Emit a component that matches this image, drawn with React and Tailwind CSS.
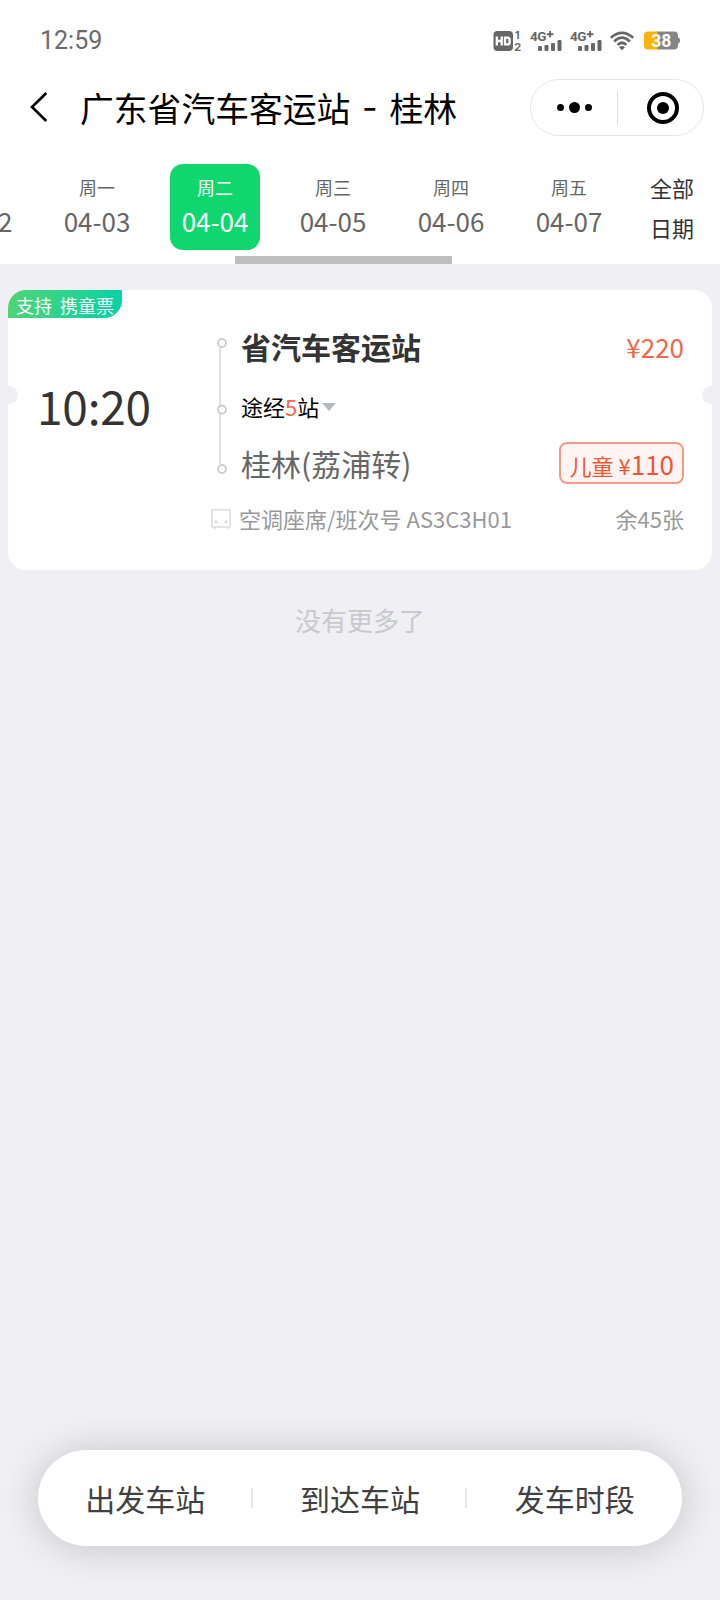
const days = [
  { week: '周日', date: '04-02' },
  { week: '周一', date: '04-03' },
  { week: '周二', date: '04-04' },
  { week: '周三', date: '04-05' },
  { week: '周四', date: '04-06' },
  { week: '周五', date: '04-07' },
];

const filters = ['出发车站', '到达车站', '发车时段'];

function HdIcon() {
  return (
    <svg width="30" height="22" viewBox="0 0 30 22" className="shrink-0 overflow-visible">
      <rect x="0.5" y="1" width="19.5" height="20" rx="4" fill="#666" />
      <path d="M3.8 6.5V15.5M8.7 6.5V15.5M3.8 11H8.7M12 7.6H14.5Q16.6 7.6 16.6 9.6V12.4Q16.6 14.4 14.5 14.4H12Z" fill="none" stroke="#fff" strokeWidth="2.3" />
      <text x="22" y="8.8" fontSize="10.5" fontWeight="700" fill="#666" className="font-[Inter,sans-serif]">1</text>
      <text x="21.2" y="20.8" fontSize="11" fontWeight="700" fill="#666" className="font-[Inter,sans-serif]">2</text>
    </svg>
  );
}

function SignalIcon() {
  return (
    <svg width="33" height="22" viewBox="0 0 33 22" className="shrink-0 overflow-visible">
      <text x="0" y="11" fontSize="13.5" fontWeight="700" letterSpacing="-0.6" fill="#666" className="font-[Roboto,sans-serif]">4G</text>
      <path d="M16.8 4.2H23.4M20.1 1V7.4" stroke="#666" strokeWidth="1.9" />
      <rect x="8" y="16" width="4" height="5" rx="1.2" fill="#666" />
      <rect x="14.5" y="15" width="4" height="6" rx="1.2" fill="#666" />
      <rect x="21" y="13" width="4" height="8" rx="1.2" fill="#666" />
      <rect x="27.5" y="10" width="4" height="11" rx="1.2" fill="#666" />
    </svg>
  );
}

function WifiIcon() {
  return (
    <svg width="24" height="20" viewBox="0 0 24 20" className="shrink-0">
      <g fill="none" stroke="#666" strokeWidth="2.7">
        <path d="M0.8 6.8Q12 -3.2 23.2 6.8" />
        <path d="M4.2 10.4Q12 3 19.8 10.4" />
        <path d="M7.6 13.9Q12 9.6 16.4 13.9" />
      </g>
      <path d="M9 16.2Q12 14 15 16.2L12 19.2Z" fill="#666" />
    </svg>
  );
}

function BatteryIcon() {
  return (
    <svg width="36" height="19" viewBox="0 0 36 19" className="shrink-0">
      <path d="M13 0.5H30Q34 0.5 34 4.5V6.5Q36 6.5 36 9.5Q36 12.5 34 12.5V14.5Q34 18.5 30 18.5H13Z" fill="#858585" />
      <path d="M4 0.5H13.5V18.5H4Q0 18.5 0 14.5V4.5Q0 0.5 4 0.5Z" fill="#fbb30b" />
      <text x="17.2" y="15.7" textAnchor="middle" fontSize="17.5" fontWeight="700" fill="#fff" className="font-[Roboto,sans-serif]">38</text>
    </svg>
  );
}

function StatusBar() {
  return (
    <div className="flex h-[79px] items-center pl-[40px] pr-[40px]">
      <span className="pt-0.5 font-[Roboto,sans-serif] text-[25px] leading-none text-[#6b6b6b]">12:59</span>
      <div className="ml-auto flex items-center pt-0.5">
        <HdIcon />
        <div className="ml-[7px] flex gap-[7px]">
          <SignalIcon />
          <SignalIcon />
        </div>
        <div className="ml-[7px] flex items-center gap-[10px]">
          <WifiIcon />
          <BatteryIcon />
        </div>
      </div>
    </div>
  );
}

function NavBar() {
  return (
    <div className="flex h-[57px] items-center pl-[30px] pr-4">
      <svg width="18" height="30" viewBox="0 0 18 30" fill="none" stroke="#000" strokeWidth="2.6" className="-mt-0.5">
        <path d="M16.3 1L2 15L16.3 29" />
      </svg>
      <h1 className="ml-[32px] flex items-center text-[33.8px] leading-[55px] text-black">
        广东省汽车客运站
        <span className="w-[39px] text-center font-[Inter,sans-serif]">-</span>
        桂林
      </h1>
      <div className="ml-auto flex h-[57px] w-[174px] items-center rounded-full border border-[#e6e6e6]">
        <div className="flex w-[86px] items-center justify-center gap-[5px]">
          <span className="size-[7px] rounded-full bg-black" />
          <span className="size-[11px] rounded-full bg-black" />
          <span className="size-[7px] rounded-full bg-black" />
        </div>
        <span className="h-[34px] w-px bg-[#e2e2e2]" />
        <div className="flex flex-1 items-center justify-center pl-1">
          <span className="flex size-8 items-center justify-center rounded-full border-4 border-black">
            <span className="size-3 rounded-full bg-black" />
          </span>
        </div>
      </div>
    </div>
  );
}

function DateTabs() {
  return (
    <div className="flex h-[128px]">
      <div className="flex w-[628px] flex-col overflow-hidden pt-7">
        <div className="-ml-[66px] flex w-max gap-7">
          {days.map((d) => (
            <div
              key={d.date}
              className={
                d.date === '04-04'
                  ? 'flex h-[86px] w-[90px] flex-col items-center rounded-[13px] bg-[#10d76d] pt-[7px] text-white'
                  : 'flex h-[86px] w-[90px] flex-col items-center pt-[7px] text-[#666]'
              }
            >
              <span className="text-[18px] leading-8">{d.week}</span>
              <span className="text-[26px] leading-9">{d.date}</span>
            </div>
          ))}
        </div>
        <div className="ml-[235px] mt-auto h-2 w-[217px] shrink-0 bg-[#bfbfbf]" />
      </div>
      <div className="flex flex-1 flex-col items-center pr-1 pt-[31px] text-[22px] leading-10 text-[#333]">
        <span>全部</span>
        <span>日期</span>
      </div>
    </div>
  );
}

function BusIcon() {
  return (
    <svg width="20" height="21" viewBox="0 0 20 21" fill="none" stroke="#dcdcdc" strokeWidth="1.6" className="-mt-0.5 shrink-0">
      <rect x="0.8" y="0.8" width="18.4" height="17.2" rx="1" />
      <path d="M3.5 18V20.5M16.5 18V20.5" />
      <circle cx="5" cy="12.8" r="1.6" fill="#dcdcdc" stroke="none" />
      <circle cx="15" cy="12.8" r="1.6" fill="#dcdcdc" stroke="none" />
    </svg>
  );
}

function RouteLine() {
  return (
    <svg width="10" height="137" viewBox="0 0 10 137" fill="#fff" stroke="#ccc" strokeWidth="1.8" className="shrink-0">
      <path d="M3 10V126" stroke="#e2e2e2" strokeWidth="2" />
      <circle cx="5" cy="5" r="4" />
      <circle cx="5" cy="71.5" r="4" />
      <circle cx="5" cy="131" r="4" />
    </svg>
  );
}

function TripCard() {
  return (
    <div className="relative mx-2 mt-[26px] flex h-[280px] rounded-[18px] bg-white">
      <div className="absolute left-0 top-0 h-7 whitespace-pre rounded-br-[18px] rounded-tl-[18px] bg-linear-[110deg] from-[#55d374] to-[#00d3a8] pl-2 pr-2 text-[18px] leading-[31px] text-white">支持  携童票</div>
      <span className="absolute -left-2 top-24 size-[18px] rounded-full bg-[#efeff4]" />
      <span className="absolute -right-2 top-24 size-[18px] rounded-full bg-[#efeff4]" />

      <div className="w-[203px] shrink-0 pl-[29px] pt-[82px] text-[46px] leading-[66px] tracking-[-0.2px] text-[#333]">10:20</div>

      <div className="flex-1 pr-7">
        <div className="flex pt-[31px]">
          <div className="flex w-[30px] shrink-0 pl-[6px] pt-[17px]">
            <RouteLine />
          </div>
          <div className="flex-1">
            <div className="flex h-[50px] items-center justify-between">
              <span className="text-[30px] font-bold text-[#333]">省汽车客运站</span>
              <span className="text-[26px] text-[#f0684a]">¥220</span>
            </div>
            <div className="flex h-[71px] items-center text-[22px] text-black">
              途经<span className="text-[#fa6846]">5</span>站
              <span className="ml-[3px] border-x-[7.5px] border-t-8 border-x-transparent border-t-[#b9b9c0]" />
            </div>
            <div className="flex h-[42px] items-center justify-between">
              <span className="text-[30px] text-[#666]">桂林(荔浦转)</span>
              <span className="flex h-[42px] items-baseline rounded-lg border-2 border-[#f29c88] bg-[#fff4f2] px-2 leading-[39px] text-[#ea5836]">
                <span className="text-[22px]">儿童</span>
                <span className="ml-[5px] text-[22px]">¥</span>
                <span className="text-[26px]">110</span>
              </span>
            </div>
          </div>
        </div>
        <div className="mt-5 flex h-8 items-center text-[22px] text-[#999]">
          <BusIcon />
          <span className="-mt-1 ml-2">空调座席/班次号 AS3C3H01</span>
          <span className="-mt-1 ml-auto">余45张</span>
        </div>
      </div>
    </div>
  );
}

function FilterBar() {
  return (
    <div className="mx-[38px] mb-[54px] mt-auto flex h-24 items-center rounded-full bg-white shadow-[0_2px_40px_rgba(0,0,0,0.18)]">
      {filters.map((name, i) => (
        <div key={name} className="flex flex-1 items-center">
          {i > 0 && <span className="-ml-0.5 h-5 w-0.5 bg-[#e6e6e6]" />}
          <span className="flex-1 text-center text-[30px] leading-10 text-[#404040]">{name}</span>
        </div>
      ))}
    </div>
  );
}

export default function App() {
  return (
    <div className="flex h-[1600px] w-[720px] flex-col overflow-hidden bg-[#efeff4] font-['Noto_Sans_CJK_SC',sans-serif]">
      <div className="bg-white">
        <StatusBar />
        <NavBar />
        <DateTabs />
      </div>
      <TripCard />
      <p className="mt-[30px] text-center text-[26px] leading-10 text-[#c9c9cd]">没有更多了</p>
      <FilterBar />
    </div>
  );
}
